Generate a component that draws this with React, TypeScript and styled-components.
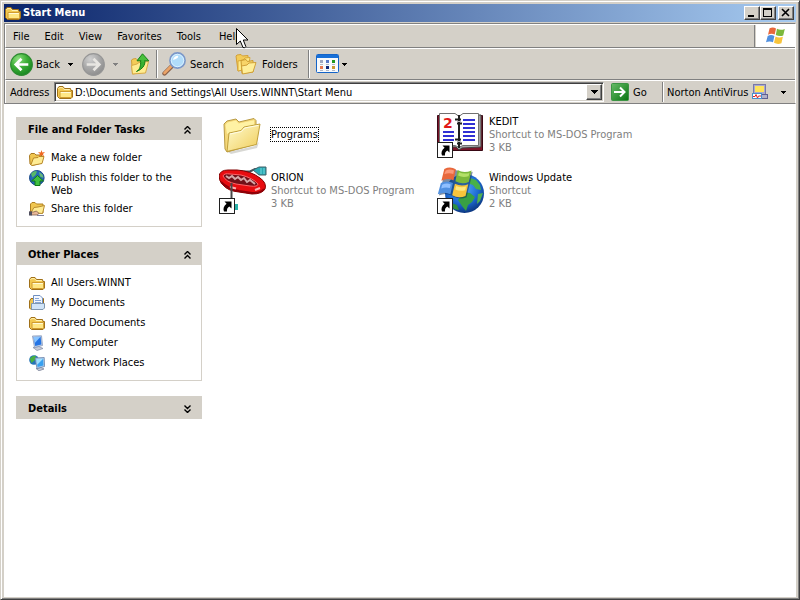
import React from "react";
import styled, { createGlobalStyle, css } from "styled-components";

const face = "#d4d0c8";
const shadow = "#808080";
const dark = "#404040";

const GlobalStyle = createGlobalStyle`
  * { box-sizing: border-box; }
  body {
    margin: 0;
    background: ${face};
    font: 11px/13px "DejaVu Sans Condensed", Tahoma, sans-serif;
    color: #000;
  }
  button, input {
    font: inherit;
    color: inherit;
    margin: 0;
    padding: 0;
    border: 0;
    background: none;
    border-radius: 0;
  }
  svg { display: block; flex: none; }
`;

const Window = styled.div`
  display: flex;
  flex-direction: column;
  min-height: 100vh;
  position: relative;
  padding: 2px;
  border: 1px solid;
  border-color: ${face} ${dark} ${dark} ${face};
  box-shadow: inset 1px 1px #fff, inset -1px -1px ${shadow};
  background: ${face};
`;

const TitleBar = styled.header`
  display: flex;
  align-items: center;
  height: 18px;
  margin: 1px 1px 0;
  padding: 0 2px 0 1px;
  background: linear-gradient(to right, #0a246a, #a6caf0);
`;

const Title = styled.h1`
  flex: 1;
  margin: 0 0 0 2px;
  font-size: 11px;
  line-height: 18px;
  font-weight: bold;
  color: #fff;
`;

const raised = css`
  border: 1px solid;
  border-color: #fff ${dark} ${dark} #fff;
  box-shadow: inset -1px -1px ${shadow};
  background: ${face};
`;

const CaptionButton = styled.button<{ $gap?: boolean }>`
  ${raised}
  display: grid;
  place-items: center;
  width: 16px;
  height: 14px;
  margin-left: ${(p) => (p.$gap ? 2 : 0)}px;
`;

const Bars = styled.div`
  margin: 1px 1px 0;
  border: 1px solid ${shadow};
  border-right-color: #fff;
`;

const Bar = styled.div<{ $height: number }>`
  display: flex;
  align-items: stretch;
  height: ${(p) => p.$height}px;
  border-top: 1px solid #fff;
  border-left: 1px solid #fff;
  border-bottom: 1px solid ${shadow};
  &:last-child { border-bottom: 0; }
`;

const MenuNav = styled.nav`
  display: flex;
  flex: 1;
  border-right: 1px solid ${shadow};
`;

const MenuButton = styled.button`
  padding: 1px 8px 0 7px;
  &:last-child { padding-left: 10px; }
`;

const Flag = styled.div`
  display: grid;
  place-items: center;
  width: 39px;
  margin-left: 1px;
  background: #fff;
`;

const ToolButton = styled.button<{ $width: number; $gap?: number; $pad?: number }>`
  display: flex;
  align-items: center;
  gap: ${(p) => p.$gap ?? 4}px;
  width: ${(p) => p.$width}px;
  padding-left: ${(p) => p.$pad ?? 4}px;
  white-space: nowrap;
`;

const ArrowButton = styled.button<{ $width: number }>`
  display: grid;
  place-items: center;
  width: ${(p) => p.$width}px;
`;

const Divider = styled.span`
  width: 2px;
  margin: 1px 0;
  border-left: 1px solid ${shadow};
  border-right: 1px solid #fff;
`;

const AddressForm = styled.form`
  display: flex;
  flex: 1;
  align-items: center;
  padding-left: 4px;
`;

const AddressLabel = styled.label`
  width: 44px;
`;

const Combo = styled.div`
  display: flex;
  flex: 1;
  align-items: center;
  height: 20px;
  padding: 1px 1px 1px 2px;
  background: #fff;
  border: 1px solid;
  border-color: ${shadow} #fff #fff ${shadow};
  box-shadow: inset 1px 1px ${dark}, inset -1px -1px ${face};
`;

const AddressInput = styled.input`
  flex: 1;
  min-width: 0;
  height: 16px;
  margin-left: 2px;
  padding-top: 1px;
  outline: none;
`;

const DropButton = styled.button`
  ${raised}
  display: grid;
  place-items: center;
  width: 16px;
  height: 16px;
`;

const GoButton = styled.button`
  display: flex;
  align-items: center;
  gap: 4px;
  width: 58px;
  padding-left: 7px;
`;

const Client = styled.div`
  display: flex;
  flex: 1;
  margin: 0 1px;
  background: #fff;
`;

const Sidebar = styled.aside`
  display: flex;
  flex-direction: column;
  gap: 15px;
  width: 198px;
  padding: 13px 0 0 12px;
`;

const PanelHeader = styled.button`
  display: flex;
  align-items: center;
  justify-content: space-between;
  width: 100%;
  height: 23px;
  padding: 2px 10px 0 12px;
  background: ${face};
  font-weight: bold;
`;

const PanelList = styled.ul`
  display: flex;
  flex-direction: column;
  gap: 4px;
  margin: 0;
  padding: 10px 12px 9px;
  border: 1px solid ${face};
  border-top: 0;
  list-style: none;
`;

const TaskLink = styled.a`
  display: flex;
  gap: 6px;
  min-height: 16px;
  color: #000;
  text-decoration: none;
  span { padding-top: 1px; }
`;

const Files = styled.main`
  flex: 1;
  display: grid;
  grid-template-columns: repeat(auto-fill, 218px);
  grid-auto-rows: 48px;
  row-gap: 8px;
  align-content: start;
  padding: 6px 0 0 17px;
`;

const FileButton = styled.button`
  display: flex;
  align-items: center;
  gap: 4px;
  text-align: left;
  white-space: nowrap;
`;

const FileText = styled.span`
  display: flex;
  flex-direction: column;
`;

const FileName = styled.span<{ $focused?: boolean }>`
  outline: ${(p) => (p.$focused ? "1px dotted #000" : "none")};
`;

const FileMeta = styled.span`
  color: #808080;
`;

const Pointer = styled.svg`
  position: absolute;
  left: 235px;
  top: 27px;
`;

const FolderIcon = () => (
  <svg width="16" height="16" viewBox="0 0 16 16">
    <path d="M.5 4.500 2 2.500H6L7.500 4.500H13.500L14 6.500H15.500V13L14 14.500H2.500L.5 12.500Z" fill="#f2c850" stroke="#a07018" />
    <path d="M1.600 4.800 2.500 3.600H5.500L7 5.500H12.800" fill="none" stroke="#fff0b0" />
    <path d="M3 7.500H14.600V12.600L13.600 13.500H3Z" fill="#ffe784" stroke="#d09c30" />
    <path d="M3.800 8.500H13.800" stroke="#fffad8" />
  </svg>
);

const BigFolder = () => (
  <svg width="48" height="48" viewBox="0 0 48 48">
    <defs>
      <linearGradient id="bf" x1="0" y1="0" x2="1" y2="1">
        <stop offset="0" stopColor="#fffcd0" />
        <stop offset="1" stopColor="#f0cc58" />
      </linearGradient>
    </defs>
    <path d="M9 42 36 36 40 32 38 38 12 44Z" fill="#a8a8a0" opacity=".45" />
    <path d="M5 14 8 11 17 9 20 12 35 8.500 37 10.500V34L8 42 6 39Z" fill="#f4d778" stroke="#b89a44" />
    <path d="M6.500 15 8.500 12.500 17 10.500 19.500 13.500 35 10.300V16L8 24Z" fill="#fff2a4" />
    <path d="M8 41.500 10 23 22 20.500 25 17 41 14 37.500 34.500Z" fill="url(#bf)" stroke="#c0a03c" />
    <path d="M11 24 22.500 21.500 25.500 18 39.500 15.400" fill="none" stroke="#fffde8" />
  </svg>
);

const ToolFolders = () => (
  <svg width="22" height="22" viewBox="0 0 22 22">
    <path d="M1 3 2 2 6 1.500 7.500 3 13 2.500V15L3 18Z" fill="#f4cc58" stroke="#d2a038" />
    <path d="M3 8 8 7 10 5 15 4.500 13 16 3 18Z" fill="#ffea88" stroke="#d8a83c" />
    <path d="M6 7.500 11 6.500 12.500 8.500 18 7.500V19L7 20.500Z" fill="#f8d468" stroke="#cb9b30" />
    <path d="M6.500 13 12 12 14 10 21 9.500 18 19 7.500 21Z" fill="#ffee98" stroke="#d0a038" />
  </svg>
);

const RoundArrow = ({ disabled }: { disabled?: boolean }) => {
  const id = disabled ? "ra-off" : "ra-on";
  return (
    <svg width="23" height="23" viewBox="0 0 22 22">
      <defs>
        <radialGradient id={id} cx=".35" cy=".25" r=".8">
          <stop offset="0" stopColor={disabled ? "#d0d0d0" : "#8ee080"} />
          <stop offset=".5" stopColor={disabled ? "#aaaaaa" : "#3cae36"} />
          <stop offset="1" stopColor={disabled ? "#8c8c8c" : "#168420"} />
        </radialGradient>
      </defs>
      <circle cx="11" cy="11" r="10.4" fill={`url(#${id})`} stroke={disabled ? "#969696" : "#2c8a30"} />
      <path
        d={disabled ? "M4.500 11H16M11 5.500 16.500 11 11 16.500" : "M17.500 11H6M11 5.500 5.500 11 11 16.500"}
        fill="none"
        stroke={disabled ? "#e8e6e2" : "#fff"}
        strokeWidth="2.6"
      />
    </svg>
  );
};

const UpIcon = () => (
  <svg width="20" height="22" viewBox="0 0 20 22">
    <path d="M1.500 7 3 6 6 5.500 8 7.500 14 7V19L2.500 21Z" fill="#f4cc58" stroke="#cfa03c" />
    <path d="M1.500 12.500 7 11 9 9.500 18.500 8.500 15.500 20 2.500 21Z" fill="#ffec90" stroke="#d8aa44" />
    <path d="M6.500 18.500C10 16.500 10.800 13 10.600 7.500H15Q15.500 15 6.500 18.500Z" fill="#38b030" stroke="#168018" />
    <path d="M7 7.800 12.500 .8 18.800 7.800Z" fill="#48c03c" stroke="#168018" strokeLinejoin="round" />
    <path d="M11.200 6.800H14.300V9H11.200Z" fill="#40b838" />
  </svg>
);

const SearchIcon = () => (
  <svg width="24" height="24" viewBox="0 0 24 24">
    <path d="M2.500 21.500 10 14" stroke="#8a6048" strokeWidth="4.400" strokeLinecap="round" />
    <path d="M2.500 21 9.500 14" stroke="#eba468" strokeWidth="2.600" strokeLinecap="round" />
    <circle cx="15.500" cy="8.500" r="7.600" fill="#b0dcfa" stroke="#7c98c8" strokeWidth="1.600" />
    <circle cx="15.500" cy="8.500" r="6.200" fill="none" stroke="#d8f0ff" />
    <path d="M11 8Q11.500 4 16 3.800 17.500 6 11 8Z" fill="#fff" />
  </svg>
);

const ViewsIcon = () => (
  <svg width="24" height="20" viewBox="0 0 24 20">
    <rect x=".5" y=".5" width="22" height="18" rx="1" fill="#f8fafc" stroke="#1464c8" />
    <rect x="1" y="1" width="21" height="3" fill="#1870d8" />
    <path d="M4 6h3v3h-3z" fill="#a0a8c0" />
    <path d="M10 6h3v3h-3z" fill="#5878c8" />
    <path d="M16 6h3v3h-3z" fill="#209820" />
    <path d="M4 12h3v3h-3z" fill="#e87850" />
    <path d="M10 12h3v3h-3z" fill="#102878" />
    <path d="M16 12h3v3h-3z" fill="#c89830" />
    <path d="M4 10.500h3M10 10.500h3M16 10.500h3M4 16.500h3M10 16.500h3M16 16.500h3" stroke="#b0b8c8" />
  </svg>
);

const FlagShape = () => (
  <>
    <path d="M4.600 2.200Q8 .6 11 2.400L9.700 8.600Q6.600 7 3 8.700Z" fill="#e8683c" />
    <path d="M12 2.800Q15.500 4.800 19.800 3L18.200 9.400Q14.600 11 10.800 9Z" fill="#7cb83c" />
    <path d="M2.700 10Q6 8.200 9.400 10L8 16.300Q4.600 14.600 1 16.300Z" fill="#5090e0" />
    <path d="M10.500 10.400Q14 12.200 17.900 10.700L16.400 17.200Q12.600 18.800 9 16.800Z" fill="#f8c43c" />
  </>
);

const FlagIcon = () => (
  <svg width="21" height="20" viewBox="0 0 21 20"><FlagShape /></svg>
);

const GoIcon = () => (
  <svg width="18" height="18" viewBox="0 0 18 18">
    <defs>
      <linearGradient id="go" x1="0" y1="0" x2="1" y2="1">
        <stop offset="0" stopColor="#68bc68" />
        <stop offset="1" stopColor="#087410" />
      </linearGradient>
    </defs>
    <rect x=".5" y=".5" width="17" height="17" rx="1" fill="url(#go)" stroke="#3c9444" />
    <path d="M3 9H13M9 4.500 13.500 9 9 13.500" fill="none" stroke="#fff" strokeWidth="2" />
  </svg>
);

const NortonIcon = () => (
  <svg width="16" height="16" viewBox="0 0 16 16">
    <rect x="1.500" y=".5" width="12" height="11" fill="#a8a8d0" stroke="#7878a8" />
    <rect x="3" y="2" width="9" height="6" fill="#ffe45c" />
    <rect x="9.500" y="10.500" width="6" height="4" fill="#b0b0c8" stroke="#606090" />
    <rect x=".5" y="9.500" width="9" height="5" fill="#fff" stroke="#4890d0" />
    <path d="M1 12.500H3L4 10.500 5.500 14 6.500 12H9" fill="none" stroke="#e02020" />
  </svg>
);

const Caret = ({ color = "#000", wide }: { color?: string; wide?: boolean }) =>
  wide ? (
    <svg width="7" height="4" viewBox="0 0 7 4" shapeRendering="crispEdges"><path d="M0 0H7V1H6V2H5V3H4V4H3V3H2V2H1V1H0Z" fill={color} /></svg>
  ) : (
    <svg width="5" height="3" viewBox="0 0 5 3" shapeRendering="crispEdges"><path d="M0 0H5V1H4V2H3V3H2V2H1V1H0Z" fill={color} /></svg>
  );

const Chevrons = ({ down }: { down?: boolean }) => (
  <svg width="9" height="8" viewBox="0 0 9 8">
    <path
      d={down ? "M1.500 .5 4.500 3.500 7.500 .5M1.500 4.500 4.500 7.500 7.500 4.500" : "M1.500 3.500 4.500 .5 7.500 3.500M1.500 7.500 4.500 4.500 7.500 7.500"}
      fill="none"
      stroke="#000"
      strokeWidth="1.400"
    />
  </svg>
);

const NewFolderIcon = () => (
  <svg width="16" height="16" viewBox="0 0 16 16">
    <path d="M.5 5.500 2 3.500H5.500L7 5H12.500V13L3 15.500 1 14Z" fill="#f0c650" stroke="#a87820" />
    <path d="M2 14.500 4.500 8 9 7.500 10 6.500H15L13 13.500 3 15.500Z" fill="#ffec94" stroke="#b88828" />
    <path d="M12.500 0 13.300 2.400 16 2 14 4 15 6.500 12.500 5 10 6.500 11 4 9 2 11.700 2.400Z" fill="#f06820" />
  </svg>
);

const PublishIcon = () => (
  <svg width="16" height="16" viewBox="0 0 16 16">
    <circle cx="7.800" cy="7.800" r="7.300" fill="#2468b8" stroke="#184888" />
    <path d="M2 4Q5 0 8 1.500L6.500 5 3.500 7.500Z" fill="#58b868" />
    <path d="M10 2 13.500 4.500 14.500 8 11 6.500Z" fill="#68b878" />
    <path d="M8.500 5.500 14.500 11H11V15.500H6V11H2.500Z" fill="#40c040" stroke="#107818" />
  </svg>
);

const ShareIcon = () => (
  <svg width="16" height="16" viewBox="0 0 16 16">
    <path d="M1.500 3 3 1.500H6L7.500 3H14V12H1.500Z" fill="#f0c650" stroke="#b08020" />
    <path d="M2 11.500 5 6.500 9 6 15.500 4.500 13.500 12.500Z" fill="#ffec94" stroke="#b88c30" />
    <path d="M0 11H4.500L7.500 10 10 12.500 8 14H3L0 13.500Z" fill="#e8b898" stroke="#705040" strokeWidth=".7" />
    <path d="M0 10.500H3V14.500H0Z" fill="#505060" />
    <path d="M8 14.500H15" stroke="#80809c" />
  </svg>
);

const DocumentsIcon = () => (
  <svg width="16" height="16" viewBox="0 0 16 16">
    <path d="M.5 6 2 3.500H14.500V13L13.500 14.500H2L.5 13Z" fill="#f0c650" stroke="#a07018" />
    <path d="M4.500 .5H11L13.500 3V11.500H4.500Z" fill="#f4f8ff" stroke="#7090c0" />
    <path d="M6 3.500H10M6 5.500H12M6 7.500H12" stroke="#88a8d8" />
    <path d="M2.500 8.500H15.500V13L14 14.500H2.500Z" fill="#d0e4f8" stroke="#8098b0" />
  </svg>
);

const ComputerIcon = () => (
  <svg width="16" height="16" viewBox="0 0 16 16">
    <path d="M4 12.500 10 11.500 14 13.500 8 15.500Z" fill="#c8ccd8" stroke="#8088a0" strokeWidth=".7" />
    <path d="M3.500 1 12.500 .8 13.500 10.500 5.500 12.500Z" fill="#c0d0e8" stroke="#8898b8" strokeWidth=".8" />
    <path d="M4.600 2 11.600 1.800 12.400 9.400 6.200 11Z" fill="#2474e4" />
    <path d="M4.600 2 11.600 1.800 5.800 8Z" fill="#88c4ff" />
  </svg>
);

const NetworkIcon = () => (
  <svg width="16" height="16" viewBox="0 0 16 16">
    <circle cx="5" cy="5" r="4.800" fill="#2474b8" />
    <path d="M.8 4Q3 .2 7 .8L6 5 2.500 8Z" fill="#48b040" />
    <path d="M7 13.500 12 12.500 15 14 10 15.800Z" fill="#c8ccd8" stroke="#707890" strokeWidth=".7" />
    <path d="M6 3 15.200 2.500 15.600 11.500 8 13.500Z" fill="#b8d0e8" stroke="#6880a8" strokeWidth=".8" />
    <path d="M7.200 4.100 14.200 3.700 14.500 10.500 8.600 12.100Z" fill="#38a0f0" />
    <path d="M7.200 4.100 14.200 3.700 8.200 9.800Z" fill="#a0e0ff" />
  </svg>
);

const ShortcutBadge = () => (
  <>
    <rect x=".5" y="32.500" width="15" height="15" fill="#fff" stroke="#202020" />
    <path d="M5.500 35.500H12.500V42.500L10.300 40.500Q7.500 42 8 45.500H5Q3.200 41.500 7.600 37.800Z" fill="#000" />
  </>
);

const OrionIcon = () => (
  <svg width="48" height="48" viewBox="0 0 48 48">
    <path d="M21 5.500H31L36 3H42" stroke="#485058" strokeWidth="2" fill="none" />
    <path d="M34 4 40 1H47V9H40Z" fill="#28a8b4" stroke="#406068" />
    <path d="M42 2V8M45 2V8" stroke="#70d8dc" />
    <path d="M0 10Q1 4 9 4H18Q32 5 41 12 48 17 46 23 43 28 33 28L20 26Q9 25 4 19 0 15 0 10Z" fill="#e80c10" stroke="#800000" />
    <path d="M2 16Q9 23 20 25L33 27Q42 27 45 23" fill="none" stroke="#900008" strokeWidth="2" />
    <path d="M4 10Q5 7 11 8L22 9Q34 12 39 18 39 21 31 20L17 18Q7 16 4 10Z" fill="#701018" stroke="#ff6468" />
    <path d="M7 10 10 12 13 10 16 13 19 11 22 14 25 12 28 16 31 14 36 18" fill="none" stroke="#d4a8a8" strokeWidth="2" />
    <path d="M11 21 17 22.500M36 24 41 22" stroke="#ffb0b0" strokeWidth="2" />
    <path d="M12.500 17V33" stroke="#484848" strokeWidth="2" />
    <path d="M16 38H19V44H16Z" fill="#28b0a8" />
    <ShortcutBadge />
  </svg>
);

const KeditIcon = () => (
  <svg width="48" height="48" viewBox="0 0 48 48">
    <path d="M.5 5.500H45.500V40.500H.5Z" fill="#7c1428" stroke="#380814" />
    <path d="M41 5H44V37L25 38 22 40 19 37H3" fill="#a8a8a8" stroke="#404040" />
    <path d="M2.500 3.500H18L21.500 6V37L18 35.500H2.500ZM22.500 6 26 3.500H41.500V35.500H26L22.500 37Z" fill="#fff" stroke="#707070" />
    <path d="M26 10H38M26 14H38M26 18H38M26 22H38M26 26H38M26 30H38M6 22H17M6 26H17M6 30H17" stroke="#3030d4" strokeWidth="2" />
    <text x="6" y="18" fontSize="14" fontWeight="bold" fontFamily="DejaVu Sans" fill="#e01818">2</text>
    <path d="M22 5V38" stroke="#202020" strokeWidth="2" />
    <path d="M18 9.500H24M20 13.500H25M18 29.500H24M20 33.500H25" stroke="#202020" strokeWidth="2" />
    <path d="M20 11.500H24M20 31.500H24" stroke="#b8b8b8" />
    <ShortcutBadge />
  </svg>
);

const UpdateIcon = () => (
  <svg width="48" height="48" viewBox="0 0 48 48">
    <defs>
      <radialGradient id="globe" cx=".45" cy=".35" r=".7">
        <stop offset="0" stopColor="#58b0ff" />
        <stop offset=".6" stopColor="#1c68d0" />
        <stop offset="1" stopColor="#082c70" />
      </radialGradient>
    </defs>
    <circle cx="27.500" cy="27.500" r="19.500" fill="url(#globe)" />
    <path d="M33 12 39 14 43 19 44 24 39 23 36 19 33 18Z" fill="#48b048" />
    <path d="M26 26 33 27 38 31 35 36 31 39 29 45 25 40 21 34Z" fill="#38a044" />
    <path d="M41 28 46 27 43 35 40 38Z" fill="#50b050" />
    <path d="M14 37 20 39 22 44 17 43Z" fill="#2c9040" />
    <g transform="translate(-1 -1) scale(1.8)">
      <g fill="#103058" opacity=".55" transform="translate(.6 .7)">
        <path d="M4.600 2.200Q8 .6 11 2.400L12 2.800Q15.500 4.800 19.800 3L16.400 17.200Q12.600 18.800 9 16.800L8 16.300Q4.600 14.600 1 16.300Z" />
      </g>
      <FlagShape />
      <path d="M5.400 3Q7.800 2 10 3L9.600 5Q7 4 4.600 5.200Z" fill="#fc9878" />
      <path d="M12.800 4Q15.500 5.300 18.600 4.400L18.100 6.200Q15 7.200 12.300 5.900Z" fill="#b4e068" />
      <path d="M3.400 11Q6 9.800 8.200 10.800L7.700 12.800Q5.400 12 2.900 13Z" fill="#90c0ff" />
      <path d="M11.200 11.700Q14 12.900 16.700 12L16.200 14Q13.400 14.800 10.700 13.600Z" fill="#ffe880" />
    </g>
    <ShortcutBadge />
  </svg>
);

const menus = ["File", "Edit", "View", "Favorites", "Tools", "Help"];

const tasks = [
  { icon: <NewFolderIcon />, label: "Make a new folder" },
  { icon: <PublishIcon />, label: "Publish this folder to the Web" },
  { icon: <ShareIcon />, label: "Share this folder" },
];

const places = [
  { icon: <FolderIcon />, label: "All Users.WINNT" },
  { icon: <DocumentsIcon />, label: "My Documents" },
  { icon: <FolderIcon />, label: "Shared Documents" },
  { icon: <ComputerIcon />, label: "My Computer" },
  { icon: <NetworkIcon />, label: "My Network Places" },
];

const files = [
  { icon: <BigFolder />, name: "Programs", meta: [], focused: true },
  { icon: <KeditIcon />, name: "KEDIT", meta: ["Shortcut to MS-DOS Program", "3 KB"] },
  { icon: <OrionIcon />, name: "ORION", meta: ["Shortcut to MS-DOS Program", "3 KB"] },
  { icon: <UpdateIcon />, name: "Windows Update", meta: ["Shortcut", "2 KB"] },
];

type PanelItem = { icon: React.ReactNode; label: string };

const Panel = ({ title, items }: { title: string; items?: PanelItem[] }) => (
  <section>
    <PanelHeader aria-expanded={!!items}>
      {title}
      <Chevrons down={!items} />
    </PanelHeader>
    {items && (
      <PanelList>
        {items.map((item) => (
          <li key={item.label}>
            <TaskLink href="#">
              {item.icon}
              <span>{item.label}</span>
            </TaskLink>
          </li>
        ))}
      </PanelList>
    )}
  </section>
);

export default function App() {
  return (
    <>
      <GlobalStyle />
      <Window>
        <TitleBar>
          <FolderIcon />
          <Title>Start Menu</Title>
          <CaptionButton aria-label="Minimize">
            <svg width="12" height="10" viewBox="0 0 12 10"><path d="M2 7H8V9H2Z" /></svg>
          </CaptionButton>
          <CaptionButton aria-label="Maximize">
            <svg width="12" height="10" viewBox="0 0 12 10"><path d="M1 0H10V9H1ZM2 2V8H9V2Z" fillRule="evenodd" /></svg>
          </CaptionButton>
          <CaptionButton aria-label="Close" $gap>
            <svg width="12" height="10" viewBox="0 0 12 10"><path d="M2 1 9 8M9 1 2 8" stroke="#000" strokeWidth="1.600" /></svg>
          </CaptionButton>
        </TitleBar>

        <Bars>
          <Bar $height={24}>
            <MenuNav>
              {menus.map((m) => (
                <MenuButton key={m}>{m}</MenuButton>
              ))}
            </MenuNav>
            <Flag><FlagIcon /></Flag>
          </Bar>

          <Bar $height={32}>
            <ToolButton $width={57} $gap={3}><RoundArrow />Back</ToolButton>
            <ArrowButton $width={15} aria-label="Back history"><Caret /></ArrowButton>
            <ToolButton $width={30} aria-label="Forward"><RoundArrow disabled /></ToolButton>
            <ArrowButton $width={15} aria-label="Forward history"><Caret color="#808080" /></ArrowButton>
            <ToolButton $width={33} $pad={7} aria-label="Up"><UpIcon /></ToolButton>
            <Divider />
            <ToolButton $width={73}><SearchIcon />Search</ToolButton>
            <ToolButton $width={77} $gap={5}><ToolFolders />Folders</ToolButton>
            <Divider />
            <ToolButton $width={30} $pad={6} aria-label="Views"><ViewsIcon /></ToolButton>
            <ArrowButton $width={9} aria-label="Choose view"><Caret /></ArrowButton>
          </Bar>

          <Bar $height={23}>
            <AddressForm onSubmit={(e) => e.preventDefault()}>
              <AddressLabel htmlFor="address">Address</AddressLabel>
              <Combo>
                <FolderIcon />
                <AddressInput id="address" defaultValue="D:\Documents and Settings\All Users.WINNT\Start Menu" />
                <DropButton type="button" aria-label="Show addresses"><Caret wide /></DropButton>
              </Combo>
              <GoButton type="submit"><GoIcon />Go</GoButton>
            </AddressForm>
            <Divider />
            <ToolButton $width={107} $pad={3}>Norton AntiVirus<NortonIcon /></ToolButton>
            <ArrowButton $width={24} aria-label="Norton AntiVirus menu"><Caret /></ArrowButton>
          </Bar>
        </Bars>

        <Client>
          <Sidebar>
            <Panel title="File and Folder Tasks" items={tasks} />
            <Panel title="Other Places" items={places} />
            <Panel title="Details" />
          </Sidebar>
          <Files>
            {files.map((f) => (
              <FileButton key={f.name}>
                {f.icon}
                <FileText>
                  <FileName $focused={f.focused}>{f.name}</FileName>
                  {f.meta.map((line) => (
                    <FileMeta key={line}>{line}</FileMeta>
                  ))}
                </FileText>
              </FileButton>
            ))}
          </Files>
        </Client>

        <Pointer width="13" height="22" viewBox="0 0 13 22">
          <path d="M.5 .5V16.500L4.300 13 7 19.500Q9 20.500 9.800 18.500L7.300 12H12Z" fill="#fff" stroke="#000" />
        </Pointer>
      </Window>
    </>
  );
}
